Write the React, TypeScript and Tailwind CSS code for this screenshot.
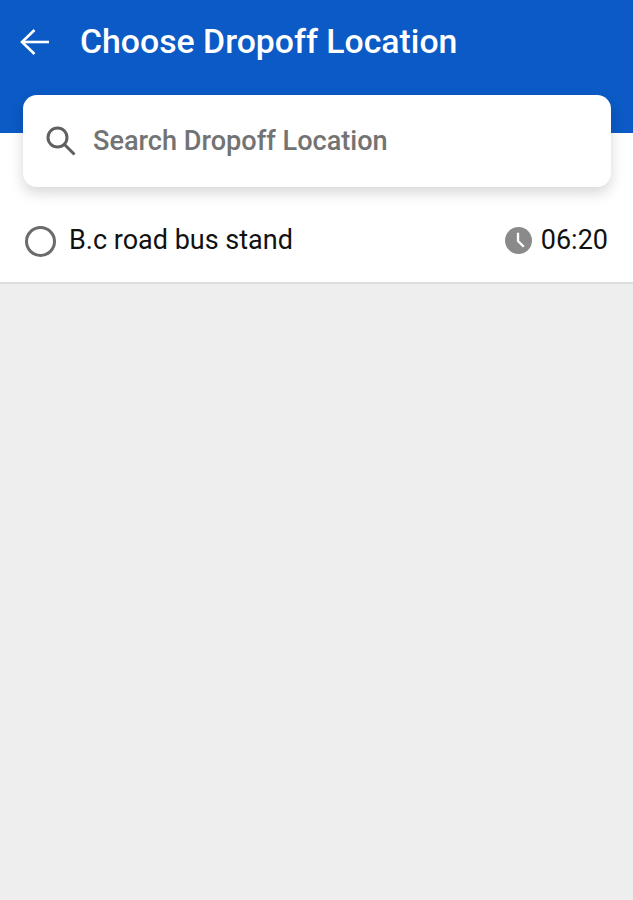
import React from 'react';

const App: React.FC = () => {
  return (
    <div className="min-h-[900px] bg-[#eeeeee] font-['Roboto',sans-serif]">
      <div className="h-[133px] bg-[#0b5ac6]">
        <div className="flex h-[83px] items-center pl-[20px]">
          <svg viewBox="0 0 29 28" className="h-[28px] w-[29px]" fill="none" stroke="#ffffff" strokeWidth="2.6">
            <path d="M2 14H29" />
            <path d="M14.5 2 L2 14 L14.5 26" />
          </svg>
          <h1 className="ml-[31px] mt-[2px] text-[33.8px] font-medium text-white">Choose Dropoff Location</h1>
        </div>
      </div>

      <div className="flow-root bg-white">
        <div className="relative mx-[23px] -mt-[38px] flex h-[92px] w-[588px] items-center rounded-[14px] bg-white pl-[23px] shadow-[0_6px_14px_rgba(0,0,0,0.16)]">
          <svg viewBox="0 0 30 30" className="h-[30px] w-[30px]" fill="none" stroke="#5f5f5f" strokeWidth="3">
            <circle cx="11.5" cy="11.5" r="9.5" />
            <path d="M18.5 18.5L28.5 28.5" />
          </svg>
          <span className="ml-[17px] text-[27.1px] font-medium text-[#737373]">Search Dropoff Location</span>
        </div>

        <div className="flex h-[97px] items-center justify-between border-b-2 border-[#dedede] pl-[25px] pr-[25px] pt-[14px]">
          <div className="flex items-center">
            <div className="h-[31px] w-[31px] rounded-full border-[3px] border-[#6b6b6b]" />
            <span className="ml-[13px] -mt-[3px] text-[27px] text-[#111111]">B.c road bus stand</span>
          </div>
          <div className="-mt-[3px] flex items-center">
            <svg viewBox="0 0 28 28" className="h-[27px] w-[27px]">
              <circle cx="14" cy="14" r="14" fill="#8a8a8a" />
              <path d="M13.5 6v8.5l6 6" fill="none" stroke="#ffffff" strokeWidth="2.4" />
            </svg>
            <span className="ml-[9px] text-[27px] text-[#111111]">06:20</span>
          </div>
        </div>
      </div>
    </div>
  );
};

export default App;
